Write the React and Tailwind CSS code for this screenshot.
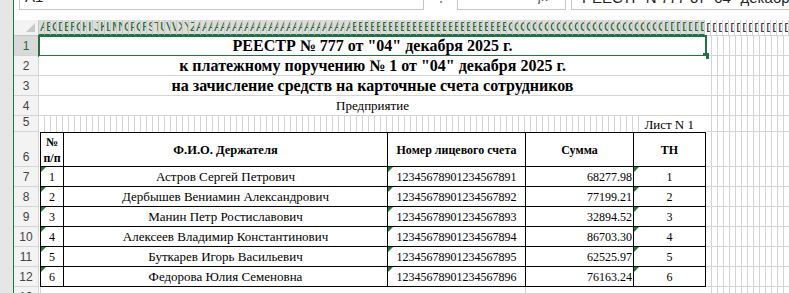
import { X, Check } from 'lucide-react'

// 6px-wide sheet columns, A1 merged across A..DG (111 columns)
const SEL_COLS = 111
const NCOLS = 126

function colName(i) {
  let s = ''
  let n = i + 1
  while (n > 0) {
    const r = (n - 1) % 26
    s = String.fromCharCode(65 + r) + s
    n = Math.floor((n - 1) / 26)
  }
  return s
}

const cols = Array.from({ length: NCOLS }, (_, i) => colName(i))

const people = [
  ['1', 'Астров Сергей Петрович', '12345678901234567891', '68277.98', '1'],
  ['2', 'Дербышев Вениамин Александрович', '12345678901234567892', '77199.21', '2'],
  ['3', 'Манин Петр Ростиславович', '12345678901234567893', '32894.52', '3'],
  ['4', 'Алексеев Владимир Константинович', '12345678901234567894', '86703.30', '4'],
  ['5', 'Буткарев Игорь Васильевич', '12345678901234567895', '62525.97', '5'],
  ['6', 'Федорова Юлия Семеновна', '12345678901234567896', '76163.24', '6'],
]

const Flag = () => (
  <span className="absolute left-0 top-0 h-0 w-0 border-r-[5px] border-t-[5px] border-r-transparent border-t-[#1e7b34]" />
)

function RowHead({ n, h, active }) {
  return (
    <div
      className={`${h} flex w-[25px] shrink-0 items-end justify-center border-b border-r pb-[2px] font-['Liberation_Sans',sans-serif] text-[12px] leading-[13px] ${
        active ? 'border-b-[#d4d4d4] border-r-[#217346] bg-[#d9d9d9] text-[#1e6b41]' : 'border-[#d4d4d4] bg-[#f3f3f3] text-[#444]'
      }`}
    >
      {n}
    </div>
  )
}

function Filler() {
  return (
    <div className="flex-1 border-b border-[#d4d4d4] bg-[linear-gradient(to_right,transparent_5px,#d4d4d4_5px)] bg-[length:6px_100%]" />
  )
}

function FormulaBar() {
  return (
    <div className="flex h-[20px] shrink-0 items-start bg-white pl-[5px] font-['Liberation_Sans',sans-serif] text-[#222]">
      <div className="flex h-[10px] w-[405px] items-end overflow-hidden border-x border-b border-[#c6c6c6] pl-[5px]">
        <span className="mb-[5px] text-[15px] leading-none">A1</span>
      </div>
      <div className="flex h-[10px] w-[33px] items-end justify-center overflow-hidden">
        <span className="mb-[6px] text-[14px] leading-none text-[#777]">⋮</span>
      </div>
      <div className="flex h-[10px] w-[109px] items-end overflow-hidden border-x border-b border-[#c6c6c6]">
        <X className="mb-[6px] ml-[14px] h-[14px] w-[14px] text-[#aaa]" />
        <Check className="mb-[6px] ml-[18px] h-[14px] w-[14px] text-[#aaa]" />
        <span className="mb-[5px] ml-[20px] font-['Liberation_Serif',serif] text-[14px] italic leading-none text-[#444]">fx</span>
      </div>
      <div className="ml-[5px] flex h-[10px] flex-1 items-end overflow-hidden whitespace-nowrap border-b border-l border-[#c6c6c6] pl-[10px]">
        <span className="mb-[4px] text-[15px] leading-none">РЕЕСТР N 777 от "04" декабря 2025 г.</span>
      </div>
    </div>
  )
}

function ColumnHeaders() {
  return (
    <div className="flex h-[16px] shrink-0 font-['Liberation_Sans',sans-serif] text-[13px] leading-[14px]">
      <div className="relative w-[25px] shrink-0 border-b border-r border-[#c6c6c6] bg-[#f3f3f3]">
        <span className="absolute bottom-[3px] right-[3px] h-0 w-0 border-b-[9px] border-l-[9px] border-b-[#c8c8c8] border-l-transparent" />
      </div>
      <div className="flex min-w-0 flex-1 overflow-hidden">
        {cols.map((c, i) =>
          i < SEL_COLS ? (
            <div key={c} className="flex w-[6px] shrink-0 items-center overflow-hidden whitespace-nowrap border-b-2 border-r border-b-[#217346] border-r-[#c8c8c8] bg-[#dcdcdc] pl-px text-[#1e6b41]">
              {c}
            </div>
          ) : (
            <div key={c} className="flex w-[6px] shrink-0 items-center overflow-hidden whitespace-nowrap border-b border-r border-[#d4d4d4] bg-white pl-px text-[#3c3c50]">
              {c}
            </div>
          )
        )}
      </div>
    </div>
  )
}

function TitleRow({ n, active, children, className = '' }) {
  return (
    <div className="flex h-[20px] shrink-0">
      <RowHead n={n} h="h-[20px]" active={active} />
      <div className={`relative flex w-[667px] shrink-0 items-end justify-center whitespace-nowrap border-b border-[#d4d4d4] bg-white ${className}`}>
        {children}
        {active && (
          <>
            <span className="absolute inset-x-[-1px] bottom-[-2px] top-[-1px] border-2 border-[#217346]" />
            <span className="absolute bottom-[-4px] right-[-3px] h-[6px] w-[6px] bg-[#217346]" />
          </>
        )}
      </div>
      <Filler />
    </div>
  )
}

function Sheet() {
  const cell = 'relative flex shrink-0 border-r border-black'
  return (
    <div className="flex flex-col">
      <TitleRow n="1" active className="pb-[1px]">
        <span className="text-[16px] font-bold leading-[17px]">РЕЕСТР № 777 от "04" декабря 2025 г.</span>
      </TitleRow>
      <TitleRow n="2" className="pb-[1px]">
        <span className="text-[16px] font-bold leading-[17px]">к платежному поручению № 1 от "04" декабря 2025 г.</span>
      </TitleRow>
      <TitleRow n="3" className="pb-[1px]">
        <span className="text-[16px] font-bold leading-[17px]">на зачисление средств на карточные счета сотрудников</span>
      </TitleRow>
      <TitleRow n="4" className="pb-[2px]">
        <span className="text-[13px] leading-[14px]">Предприятие</span>
      </TitleRow>

      {/* row 5 */}
      <div className="flex h-[16px] shrink-0">
        <RowHead n="5" h="h-[16px]" />
        <div className="flex w-[667px] shrink-0">
          <div className="flex-1 bg-[linear-gradient(to_right,transparent_5px,#d4d4d4_5px)] bg-[length:6px_100%]" />
          <div className="flex w-[63px] items-end justify-end whitespace-nowrap bg-white pb-[1px] pr-[12px] text-[13px] leading-[13px]">
            Лист N 1
          </div>
        </div>
        <Filler />
      </div>

      {/* row 6: table header */}
      <div className="flex h-[35px] shrink-0">
        <RowHead n="6" h="h-[35px]" />
        <div className="flex w-[667px] shrink-0 bg-white pl-px">
          <div className="flex w-[666px] border-y border-black text-[12px] font-bold leading-[16px]">
            <div className={`${cell} w-[24px] flex-col items-center justify-center border-l`}>
              <span>№</span>
              <span>п/п</span>
            </div>
            <div className={`${cell} w-[324px] items-center justify-center text-[12.5px]`}>Ф.И.О. Держателя</div>
            <div className={`${cell} w-[138px] items-center justify-center`}>Номер лицевого счета</div>
            <div className={`${cell} w-[108px] items-center justify-center`}>Сумма</div>
            <div className={`${cell} w-[72px] items-center justify-center`}>ТН</div>
          </div>
        </div>
        <Filler />
      </div>

      {people.map((p, i) => (
        <div key={p[0]} className="flex h-[20px] shrink-0">
          <RowHead n={String(7 + i)} h="h-[20px]" />
          <div className="flex w-[667px] shrink-0 bg-white pl-px">
            <div className="flex w-[666px] border-b border-black text-[12px] leading-[14px]">
              <div className={`${cell} w-[24px] items-end justify-center border-l pb-[2px]`}>
                <Flag />
                {p[0]}
              </div>
              <div className={`${cell} w-[324px] items-end justify-center whitespace-nowrap pb-[2px] text-[13px]`}>{p[1]}</div>
              <div className={`${cell} w-[138px] items-end justify-center pb-[2px]`}>
                <Flag />
                {p[2]}
              </div>
              <div className={`${cell} w-[108px] items-end justify-end pb-[2px] pr-[1px]`}>{p[3]}</div>
              <div className={`${cell} w-[72px] items-end justify-center pb-[2px]`}>
                <Flag />
                {p[4]}
              </div>
            </div>
          </div>
          <Filler />
        </div>
      ))}

      {/* row 13, mostly out of view */}
      <div className="flex h-[20px] shrink-0">
        <RowHead n="13" h="h-[20px]" />
        <div className="flex w-[667px] shrink-0 bg-white pl-px">
          <div className="w-[486px] border-x border-[#d4d4d4]" />
        </div>
        <Filler />
      </div>
    </div>
  )
}

export default function App() {
  return (
    <div className="flex h-[293px] w-[789px] overflow-hidden bg-white font-['Liberation_Serif',serif] text-black">
      <div className="w-[13px] shrink-0 bg-[#e6e6e6]" />
      <div className="w-px shrink-0 bg-[#217346]" />
      <div className="flex min-w-0 flex-1 flex-col">
        <FormulaBar />
        <ColumnHeaders />
        <Sheet />
      </div>
    </div>
  )
}
